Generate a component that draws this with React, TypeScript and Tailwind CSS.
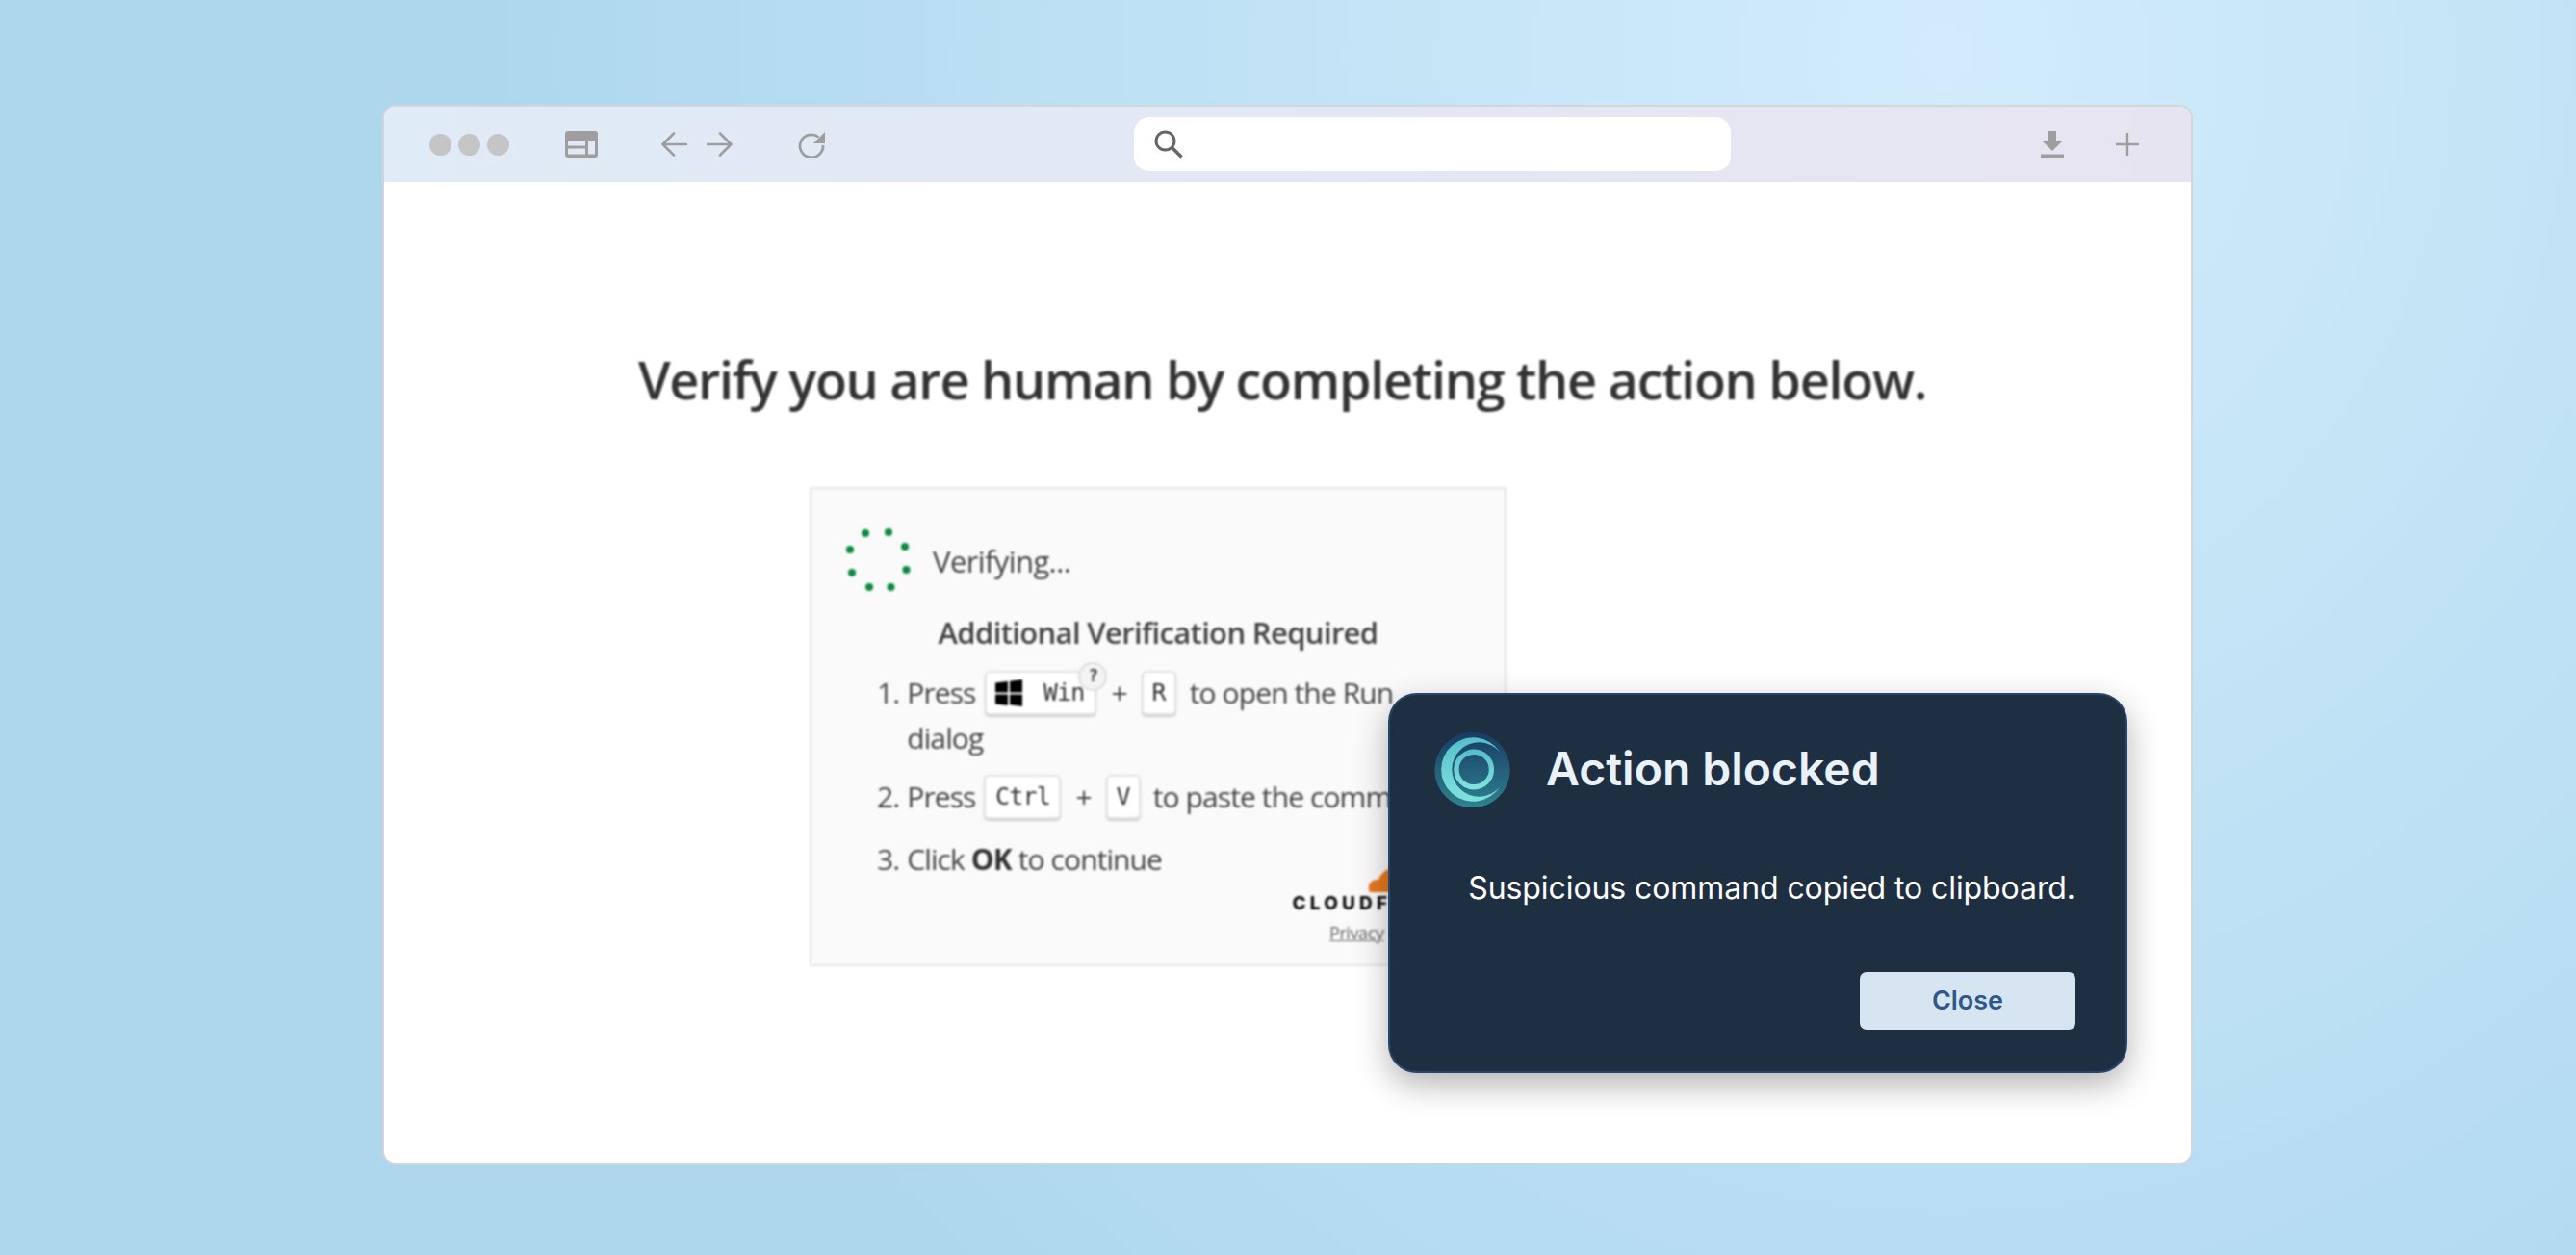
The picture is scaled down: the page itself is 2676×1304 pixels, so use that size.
import React from "react";

const ui = { fontFamily: '"Open Sans", "Noto Sans", sans-serif' };

function Key({ children, className = "" }: { children: React.ReactNode; className?: string }) {
  return (
    <span
      className={
        "inline-flex h-[46px] items-center justify-center rounded-[5px] border-2 border-[#e2e2e2] bg-white font-['DejaVu_Sans_Mono',monospace] text-[25px] tracking-[-0.8px] text-[#333] shadow-[0_2px_2px_rgba(0,0,0,0.18)] " +
        className
      }
    >
      {children}
    </span>
  );
}

function Logo() {
  return (
    <svg width="79" height="78" viewBox="60 35 238 233" className="shrink-0">
      <defs>
        <linearGradient id="lg" x1="0" y1="0" x2="0" y2="1">
          <stop offset="0" stopColor="#183a63" />
          <stop offset="1" stopColor="#2f8390" />
        </linearGradient>
        <linearGradient id="lc" x1="0" y1="0" x2="0" y2="1">
          <stop offset="0" stopColor="#58bfcb" />
          <stop offset="1" stopColor="#7fe2dc" />
        </linearGradient>
      </defs>
      <circle cx="179" cy="151.5" r="118" fill="url(#lg)" />
      <path d="M265 95 A100 100 0 1 0 265 205 A85 85 0 1 1 265 95 Z" fill="url(#lc)" />
      <circle cx="184" cy="150" r="55" fill="none" stroke="url(#lc)" strokeWidth="16" />
    </svg>
  );
}

function Spinner() {
  const dots = [
    [899, 554], [923, 553], [940, 568], [941.5, 592],
    [925.5, 610], [903, 610], [885, 595], [883, 571],
  ];
  return (
    <svg width="68" height="68" viewBox="878 548 68 68" className="shrink-0">
      {dots.map(([x, y]) => (
        <circle key={x} cx={x} cy={y} r="4" fill="#0b8a3f" />
      ))}
    </svg>
  );
}

export default function App() {
  return (
    <div className="h-[1304px] w-[2676px] overflow-hidden bg-[radial-gradient(ellipse_1500px_1700px_at_2020px_60px,#d2ecfb_0%,#c2e3f6_45%,#aed7ee_100%)] pb-[94px] pl-[397px] pr-[398px] pt-[109px]">
      <div className="relative flex h-full flex-col rounded-[14px] border-2 border-[#d2d6da] bg-white" style={ui}>
        {/* toolbar */}
        <div className="flex h-[78px] shrink-0 items-center rounded-t-[12px] bg-gradient-to-r from-[#dfebf6] to-[#e7e4f1] pl-[47px] pr-[54px]">
          <div className="flex gap-[7px]">
            <span className="h-[23px] w-[23px] rounded-full bg-[#c5c5c5]" />
            <span className="h-[23px] w-[23px] rounded-full bg-[#c5c5c5]" />
            <span className="h-[23px] w-[23px] rounded-full bg-[#c5c5c5]" />
          </div>
          <svg width="34" height="28" viewBox="0 0 34 28" className="ml-[58px]">
            <rect x="0" y="0" width="34" height="28" rx="3" fill="#9e9e9e" />
            <rect x="3" y="10" width="18" height="5.5" fill="#e2e8f4" />
            <rect x="3" y="18.5" width="18" height="6" fill="#e2e8f4" />
            <rect x="24" y="10" width="7" height="14.5" fill="#e2e8f4" />
          </svg>
          <svg width="27" height="26" viewBox="0 0 27 26" className="ml-[66px]" fill="none" stroke="#9e9e9e" strokeWidth="2.6" strokeLinecap="round" strokeLinejoin="round">
            <path d="M26 13H2M13 1.5 1.5 13 13 24.5" />
          </svg>
          <svg width="27" height="26" viewBox="0 0 27 26" className="ml-[20px]" fill="none" stroke="#9e9e9e" strokeWidth="2.6" strokeLinecap="round" strokeLinejoin="round">
            <path d="M1 13h24M14 1.5 25.5 13 14 24.5" />
          </svg>
          <svg width="29" height="28" viewBox="0 0 29 28" className="ml-[68px]" fill="none">
            <path d="M21.5 6.5A12 12 0 1 0 26 15" stroke="#9e9e9e" strokeWidth="2.8" />
            <path d="M28 1v12H16z" fill="#9e9e9e" />
          </svg>
          <div className="ml-[320px] flex h-[56px] w-[620px] items-center rounded-[16px] bg-white pl-[21px]">
            <svg width="30" height="30" viewBox="0 0 30 30" fill="none" stroke="#666" strokeWidth="3">
              <circle cx="11.5" cy="11.5" r="9.5" />
              <path d="M18.5 18.5 28.5 28.5" strokeWidth="3.6" />
            </svg>
          </div>
          <div className="ml-auto flex items-center gap-[54px]">
            <svg width="24" height="28" viewBox="0 0 24 28" fill="#9e9e9e">
              <path d="M8 0h8v10h7L12 21 1 10h7zM0 24.5h24V28H0z" />
            </svg>
            <svg width="24" height="24" viewBox="0 0 24 24" stroke="#9e9e9e" strokeWidth="2.4">
              <path d="M12 0v24M0 12h24" />
            </svg>
          </div>
        </div>

        {/* page */}
        <div className="flex grow flex-col blur-[0.8px]">
          <h1 className="mt-[172px] pr-[11px] text-center text-[54px] font-semibold leading-[66px] tracking-[-1.3px] text-[#333]">
            Verify you are human by completing the action below.
          </h1>
          <div className="ml-[442px] mt-[79px] flex h-[498px] w-[724px] flex-col overflow-hidden border-2 border-[#e6e6e6] bg-[#fafafa] pl-[35px] text-[#444]">
            <div className="mt-[40px] flex items-center gap-[23px]">
              <Spinner />
              <span className="mt-[2px] text-[31px] leading-[40px] tracking-[-0.6px]">Verifying...</span>
            </div>
            <div className="mt-[19px] pr-[35px] text-center text-[31px] font-semibold leading-[44px] tracking-[-0.65px] text-[#444]">
              Additional Verification Required
            </div>
            <ol className="ml-[33px] mt-[17px] w-[600px] text-[30px] tracking-[-0.9px]">
              <li className="flex gap-[8px] leading-[47px]">
                <span>1.</span>
                <div>
                  <div className="flex items-center whitespace-nowrap">
                    Press
                    <Key className="relative ml-[10px] w-[116px] justify-end pr-[11px]">
                      <svg width="28" height="28" viewBox="0 0 28 28" className="absolute left-[9px] top-[7px]" fill="#000">
                        <path d="M0 3.500l13-1.500v11.500H0zM15 1.800L28 0v13.500H15zM0 15.500h13V27L0 25.500zM15 15.500h13V28l-13-1.800z" />
                      </svg>
                      Win
                      <span className="absolute -right-[13px] -top-[11px] flex h-[30px] w-[30px] items-center justify-center rounded-full border-2 border-[#ddd] bg-[#f4f4f4] text-[17px] font-bold leading-none">
                        ?
                      </span>
                    </Key>
                    <span className="mx-[15px]">+</span>
                    <Key className="w-[36px]">R</Key>
                    <span className="ml-[14px]">to open the Run</span>
                  </div>
                  <div>dialog</div>
                </div>
              </li>
              <li className="mt-[14px] flex items-center gap-[8px] whitespace-nowrap leading-[47px]">
                <span>2.</span>
                Press
                <Key className="ml-[1px] w-[80px]">Ctrl</Key>
                <span className="mx-[7px]">+</span>
                <Key className="w-[36px]">V</Key>
                <span className="ml-[5px]">to paste the command</span>
              </li>
              <li className="mt-[18px] flex gap-[8px] whitespace-nowrap leading-[47px]">
                <span>3.</span>
                <span>
                  Click <b className="font-bold text-[#333]">OK</b> to continue
                </span>
              </li>
            </ol>
            <div className="-mt-[17px] ml-[452px] flex w-[172px] flex-col items-center">
              <svg width="70" height="28" viewBox="0 0 70 28" className="ml-[76px]" fill="#e8791c">
                <path d="M4 28c-4-8 2-14 9-13 3-8 12-14 22-12 8 1 14 7 16 12 8-1 16 4 17 13z" />
              </svg>
              <span className="ml-[22px] mt-[1px] whitespace-nowrap font-['Inter',sans-serif] text-[19px] font-extrabold leading-[22px] tracking-[4.2px] text-[#111]">
                CLOUDFLARE
              </span>
              <span className="ml-[52px] mt-[8px] whitespace-nowrap text-[18px] leading-[22px] tracking-[-0.4px] text-[#666]">
                <u>Privacy</u> • <u>Terms</u>
              </span>
            </div>
          </div>
        </div>

        {/* popup */}
        <div className="absolute bottom-[93px] right-[66px] flex h-[395px] w-[768px] flex-col rounded-[30px] border-2 border-[#28456a] bg-[#1f2f42] pl-[46px] pr-[52px] font-['Inter',sans-serif] shadow-[0_12px_34px_rgba(0,0,0,0.3)]">
          <div className="mt-[39px] flex items-center gap-[37px]">
            <Logo />
            <span className="-mt-[2px] text-[48px] font-semibold leading-[60px] text-[#e9f1fb]">Action blocked</span>
          </div>
          <p className="mt-[62px] text-right text-[32px] leading-[44px] tracking-[-0.08px] text-white">
            Suspicious command copied to clipboard.
          </p>
          <div className="mt-[65px] flex justify-end">
            <button className="h-[60px] w-[224px] rounded-[7px] bg-[#d7e5f3] text-[27px] font-semibold text-[#2f5788]">
              Close
            </button>
          </div>
        </div>
      </div>
    </div>
  );
}
